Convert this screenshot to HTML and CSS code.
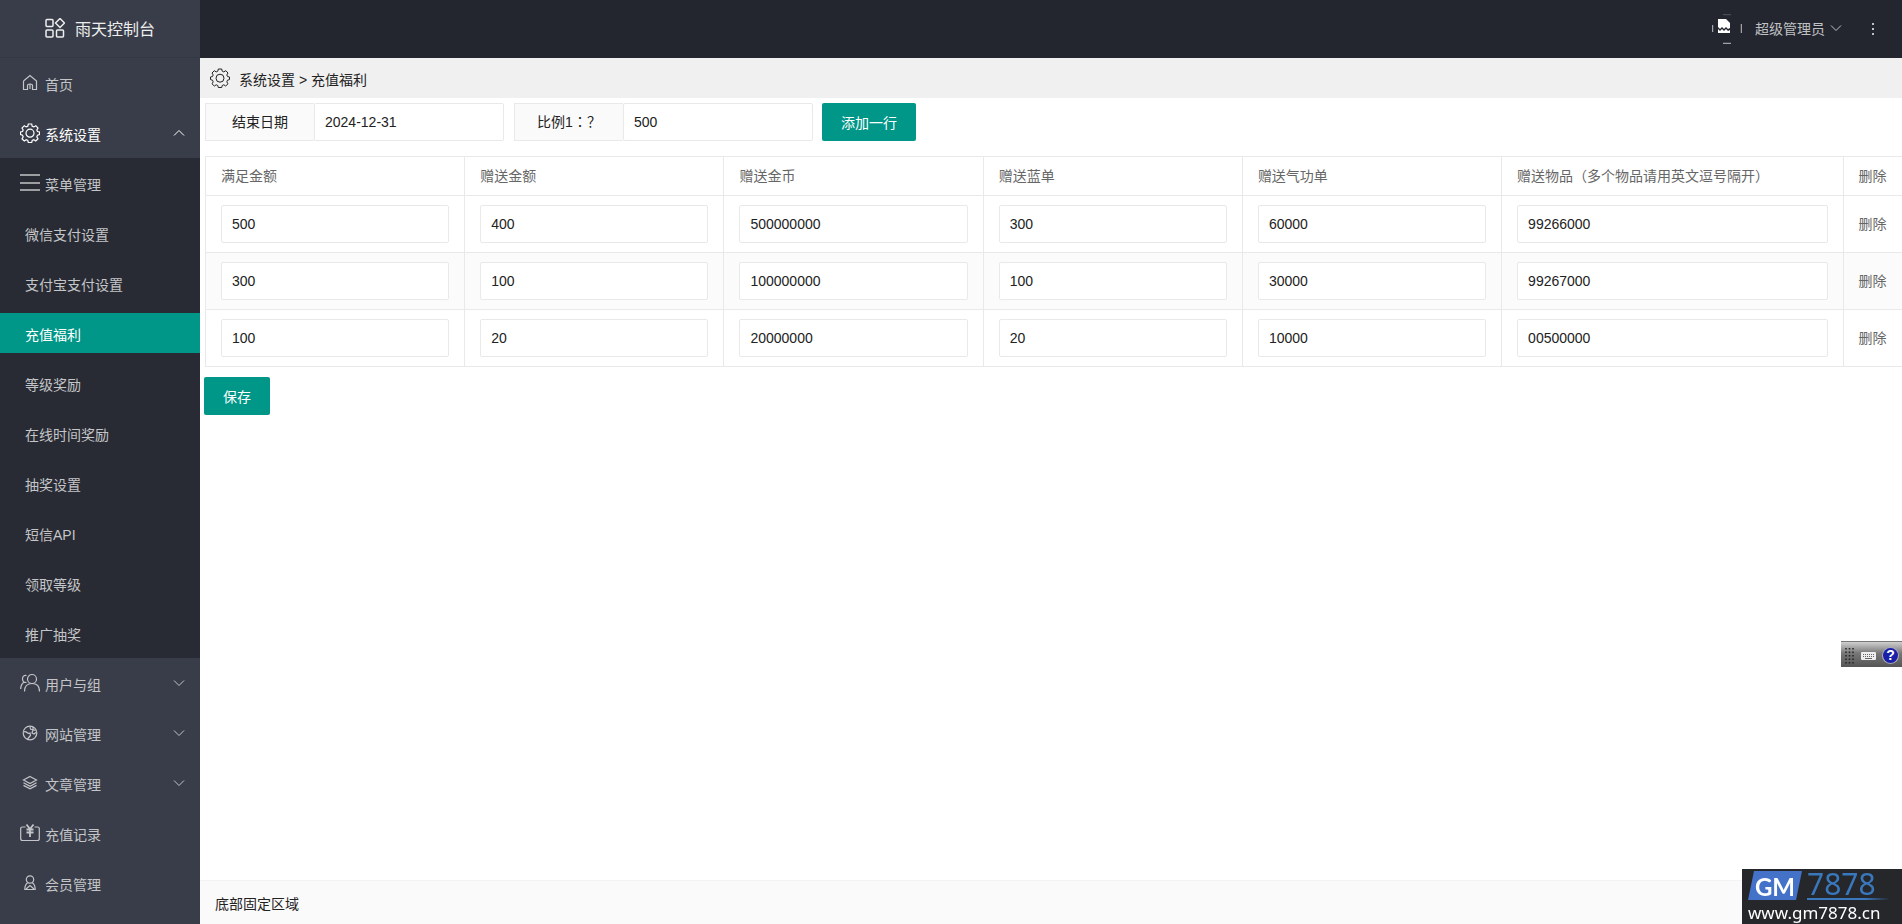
FILE: index.html
```html
<!DOCTYPE html>
<html lang="zh-CN">
<head>
<meta charset="utf-8">
<title>雨天控制台</title>
<link rel="stylesheet" href="styles.css">
</head>
<body>
<svg class="sprite" aria-hidden="true">
  <symbol id="gear" viewBox="0 0 20 20"><path d="M8.3 1h3.4l.5 2.2 1.6.7 2-1.2 2.2 2.3-1.2 2 .7 1.5 2 .5v2.600l-2 .6-.7 1.700 1.200 1.900-2.300 2.200-1.900-1.200-1.600.7-.5 2H8.300l-.5-2-1.600-.7-1.900 1.200L2 15.800l1.200-1.900-.7-1.700-2-.6V9l2-.5.7-1.500-1.200-2L4.300 2.700l1.900 1.200 1.600-.7z"/><circle cx="10" cy="10.200" r="4"/></symbol>
  <symbol id="down" viewBox="0 0 12 8"><path d="M1 1.500 6 6.500 11 1.500"/></symbol>
</svg>
<div class="app">
  <aside class="side">
    <a class="logo" href="#">
      <svg class="icon" viewBox="0 0 20 20"><rect x="1" y="1.500" width="7" height="7" rx="1"/><rect x="1" y="12" width="7" height="7" rx="1"/><rect x="11.500" y="12" width="7" height="7" rx="1"/><path d="M15 .5 19.500 5 15 9.500 10.500 5z"/></svg>
      <span>雨天控制台</span>
    </a>
    <nav>
      <a class="item" href="#"><svg class="icon" viewBox="0 0 20 20"><path d="M3.500 8v8.500h4v-4q0-1.500 2.500-1.500t2.500 1.500v4h4V8L10 2.500 3.500 8M10 11v5"/></svg><span>首页</span></a>
      <a class="item on" href="#"><svg class="icon"><use href="#gear"/></svg><span>系统设置</span><svg class="arrow up"><use href="#down"/></svg></a>
      <div class="sub">
        <a class="item" href="#"><svg class="icon bars" viewBox="0 0 20 20"><path d="M0 2h20M0 10h20M0 17h20"/></svg><span>菜单管理</span></a>
        <a class="item plain" href="#">微信支付设置</a>
        <a class="item plain" href="#">支付宝支付设置</a>
        <a class="item plain current" href="#">充值福利</a>
        <a class="item plain" href="#">等级奖励</a>
        <a class="item plain" href="#">在线时间奖励</a>
        <a class="item plain" href="#">抽奖设置</a>
        <a class="item plain" href="#">短信API</a>
        <a class="item plain" href="#">领取等级</a>
        <a class="item plain" href="#">推广抽奖</a>
      </div>
      <a class="item" href="#"><svg class="icon" viewBox="0 0 20 20"><circle cx="12" cy="6" r="4.500"/><path d="M4.500 18.500q0-8 7.500-8t7.500 8M6.500 2.500Q2.500 2 2.500 6q0 2 1.500 3.200Q.8 11 .7 16M4 9.200l2.500.3"/></svg><span>用户与组</span><svg class="arrow"><use href="#down"/></svg></a>
      <a class="item" href="#"><svg class="icon" viewBox="0 0 20 20"><circle cx="10" cy="10" r="6.800"/><path d="M3.500 9q2-1 3.500.5t3 .5l.5 2.500-3 3.500M10 3.500l.5 2.500 2.500 1-1 3 2 1 2.500-2M13 4v2.500l2.500 1"/></svg><span>网站管理</span><svg class="arrow"><use href="#down"/></svg></a>
      <a class="item" href="#"><svg class="icon" viewBox="0 0 20 20"><path d="M10 3.500 16.500 7 10 10.500 3.500 7zM3.500 9.700l6.500 3.500 6.500-3.500M3.500 12.400l6.500 3.500 6.500-3.500"/></svg><span>文章管理</span><svg class="arrow"><use href="#down"/></svg></a>
      <a class="item" href="#"><svg class="icon" viewBox="0 0 20 20"><path d="M5.500 4h-3Q.7 4 .7 5.500v10Q.7 17.500 2.500 17.500h15q1.800 0 1.800-2v-10Q19.300 4 17.500 4h-3"/><path class="bold" d="M6.500 1.500 10 6l3.500-4.500M10 6v8M6.500 6.500h7M6.500 9.500h7"/></svg><span>充值记录</span></a>
      <a class="item" href="#"><svg class="icon" viewBox="0 0 20 20"><circle cx="10" cy="6.500" r="3.700"/><path d="M8 9.500Q4.800 11.500 4.800 16.500h10.400Q15.200 11.500 12 9.500M6 16l4-3.500 4 3.500"/></svg><span>会员管理</span></a>
    </nav>
  </aside>
  <div class="page">
    <header class="top">
      <svg class="avatar" viewBox="0 0 30 30"><path class="fill" d="M6 5h8l4 4v5l-2 1-2-2-2 2-2-2-2 2-2-2zM6 15l2 2 2-2 2 2 2-2 2 2 2-1v3H6z"/><path d="M.7 11v7M29.300 10v9M11 29.300h8"/><path class="faint" d="M11 .7h8"/></svg>
      <button class="user" type="button">超级管理员<svg class="arrow"><use href="#down"/></svg></button>
      <button class="more" type="button" aria-label="更多"><i></i><i></i><i></i></button>
    </header>
    <div class="crumb"><svg class="icon"><use href="#gear"/></svg><span>系统设置 &gt; 充值福利</span></div>
    <main class="main">
      <form class="form">
        <div class="row">
          <div class="field"><label for="end">结束日期</label><input id="end" type="text" value="2024-12-31"></div>
          <div class="field"><label for="rate">比例1<span lang="zh-Hant">：</span>？</label><input id="rate" type="text" value="500"></div>
          <button class="btn" type="button">添加一行</button>
        </div>
        <table class="grid">
          <colgroup><col class="c"><col class="c"><col class="c"><col class="c"><col class="c"><col><col class="del"></colgroup>
          <thead><tr><th>满足金额</th><th>赠送金额</th><th>赠送金币</th><th>赠送蓝单</th><th>赠送气功单</th><th>赠送物品（多个物品请用英文逗号隔开）</th><th>删除</th></tr></thead>
          <tbody>
            <tr><td><input aria-label="满足金额" value="500"></td><td><input aria-label="赠送金额" value="400"></td><td><input aria-label="赠送金币" value="500000000"></td><td><input aria-label="赠送蓝单" value="300"></td><td><input aria-label="赠送气功单" value="60000"></td><td><input aria-label="赠送物品" value="99266000"></td><td><a href="#">删除</a></td></tr>
            <tr><td><input aria-label="满足金额" value="300"></td><td><input aria-label="赠送金额" value="100"></td><td><input aria-label="赠送金币" value="100000000"></td><td><input aria-label="赠送蓝单" value="100"></td><td><input aria-label="赠送气功单" value="30000"></td><td><input aria-label="赠送物品" value="99267000"></td><td><a href="#">删除</a></td></tr>
            <tr><td><input aria-label="满足金额" value="100"></td><td><input aria-label="赠送金额" value="20"></td><td><input aria-label="赠送金币" value="20000000"></td><td><input aria-label="赠送蓝单" value="20"></td><td><input aria-label="赠送气功单" value="10000"></td><td><input aria-label="赠送物品" value="00500000"></td><td><a href="#">删除</a></td></tr>
          </tbody>
        </table>
        <button class="btn save" type="button">保存</button>
      </form>
    </main>
    <footer class="foot">底部固定区域</footer>
  </div>
</div>
<div class="ime">
  <svg class="grip" viewBox="0 0 9 18"><path d="M1 1v17M4.500 1v17M8 1v17"/></svg>
  <svg class="keys" viewBox="0 0 15 9"><rect width="15" height="8" y="1" rx="1"/><path d="M2 3.500h11M2 5.500h11"/><path class="space" d="M4 7.500h7"/></svg>
  <span class="help">?</span>
</div>
<div class="mark">
  <div class="brand"><span class="gm">GM</span><span class="num">7878</span></div>
  <div class="url">www.gm7878.cn</div>
</div>
</body>
</html>
```
FILE: styles.css
```css
* { box-sizing: border-box; }
body {
  margin: 0;
  font: 14px/24px "Liberation Sans", "Noto Sans CJK SC", sans-serif;
  color: #222;
  background: #fff;
}
a { color: inherit; text-decoration: none; }
button, input { font: inherit; color: inherit; }
button { border: 0; background: none; padding: 0; cursor: pointer; }
svg { fill: none; stroke: currentColor; }
.sprite { position: absolute; width: 0; height: 0; }
.icon { width: 20px; height: 20px; flex: none; stroke-width: 1.2; }
.bars { stroke-width: 1.5; }
.bold { stroke-width: 1.8; }
.arrow { width: 12px; height: 8px; flex: none; }

.app { display: flex; height: 100vh; overflow: hidden; }
.side {
  flex: none;
  width: 200px;
  overflow: hidden;
  background: #393d49;
  color: #c4c5c8;
}
.logo {
  display: flex;
  align-items: center;
  gap: 10px;
  height: 58px;
  padding: 2px 0 0 45px;
  border-bottom: 1px solid #343843;
  font-size: 16px;
  color: #eee;
}
.logo .icon { margin-bottom: 3px; stroke-width: 1.5; }
.item {
  display: flex;
  align-items: center;
  gap: 5px;
  height: 50px;
  padding: 4px 15px 0 20px;
}
.item .icon { margin-bottom: 5px; }
.item .arrow { margin: 0 0 4px auto; }
.up { transform: rotate(180deg); }
.on { color: #fff; }
.sub { display: flow-root; background: #282b33; }
.plain { height: 40px; margin: 5px 0 10px; padding-left: 25px; }
.plain:last-child { margin-bottom: 5px; }
.current { background: #009688; color: #fff; }

.page { flex: 1; min-width: 0; display: flex; flex-direction: column; }
.top {
  display: flex;
  align-items: center;
  justify-content: flex-end;
  height: 58px;
  padding-right: 24px;
  background: #23262e;
  color: #c0c1c4;
}
.avatar { width: 30px; height: 30px; margin-right: 13px; }
.avatar .fill { fill: #fff; stroke: none; }
.avatar .faint { opacity: .3; }
.user { display: flex; align-items: center; gap: 5px; }
.user .arrow { margin-bottom: 2px; }
.more { display: grid; gap: 3px; padding: 4px; margin-left: 26px; }
.more i { width: 2px; height: 2px; background: currentColor; }
.crumb {
  display: flex;
  align-items: center;
  gap: 9px;
  height: 40px;
  padding: 4px 10px 0;
  background: #f0f0f0;
}
.crumb .icon { margin-bottom: 5px; stroke-width: 1; }

.main { flex: 1; padding: 5px 0 0 5px; }
.row { display: flex; gap: 10px; margin-bottom: 15px; }
.row .btn { margin-left: -1px; }
.field { display: flex; width: 299px; }
.field label {
  width: 109px;
  height: 38px;
  border: 1px solid #e9e9e9;
  border-right: 0;
  background: #fafafa;
  line-height: 36px;
  text-align: center;
}
input {
  display: block;
  width: 100%;
  height: 38px;
  padding: 0 10px;
  border: 1px solid #e9e9e9;
  border-radius: 2px;
  background: #fff;
}
.field input { flex: 1; min-width: 0; }
.btn {
  height: 38px;
  padding: 2px 19px 0;
  border-radius: 2px;
  background: #009688;
  color: #fff;
}
.grid {
  width: 100%;
  table-layout: fixed;
  border-collapse: collapse;
  color: #666;
}
.c { width: 15.28%; }
.del { width: 59px; }
.grid th, .grid td {
  padding: 9px 15px;
  border: 1px solid #e9e9e9;
  border-right-width: 0;
  font-weight: 400;
  text-align: left;
  white-space: nowrap;
}
.grid th { height: 39px; padding: 0 15px; }
.grid tbody tr:nth-child(even) { background: #fbfbfb; }
.grid input { color: #222; }
.save { margin: 10px 0 0 -1px; }
.foot {
  height: 44px;
  padding: 2px 15px 0;
  border-top: 1px solid #f3f3f3;
  background: #fafafa;
  line-height: 42px;
}

.ime {
  position: fixed;
  right: 0;
  top: 641px;
  display: flex;
  align-items: center;
  gap: 7px;
  width: 61px;
  height: 26px;
  padding: 2px 0 0 4px;
  border-top: 1px solid #777;
  background: linear-gradient(#cfcfcf, #777 45%, #555);
}
.grip { width: 9px; height: 18px; flex: none; stroke: #222; stroke-width: 1.5; stroke-dasharray: 1.5 2; }
.keys { width: 15px; height: 9px; flex: none; stroke: #666; stroke-dasharray: 1 1; }
.keys rect { fill: #eee; stroke: none; }
.keys .space { stroke-dasharray: none; }
.help {
  flex: none;
  width: 15px;
  height: 15px;
  border-radius: 50%;
  background: #1b1fa8;
  box-shadow: 0 0 0 1px #aab;
  color: #fff;
  font-weight: 700;
  line-height: 15px;
  text-align: center;
}
.mark {
  position: fixed;
  right: 0;
  bottom: 0;
  width: 160px;
  height: 55px;
  padding: 2px 6px 0;
  background: #25272b;
  color: #fff;
  font-family: "Noto Sans", sans-serif;
}
.brand { display: flex; align-items: center; gap: 5px; height: 29px; }
.gm {
  width: 54px;
  height: 29px;
  clip-path: polygon(6px 0, 100% 0, 48px 100%, 0 100%);
  background: #4472c9;
  font: 700 24px/32px Lato, sans-serif;
  text-align: center;
}
.num {
  width: 82px;
  height: 29px;
  border-bottom: 2px solid;
  border-image: linear-gradient(90deg, #3a78bd 70%, #25272b) 1;
  color: #3a78bd;
  font-size: 30px;
  line-height: 26px;
}
.url { font-size: 17px; line-height: 25px; }
```
